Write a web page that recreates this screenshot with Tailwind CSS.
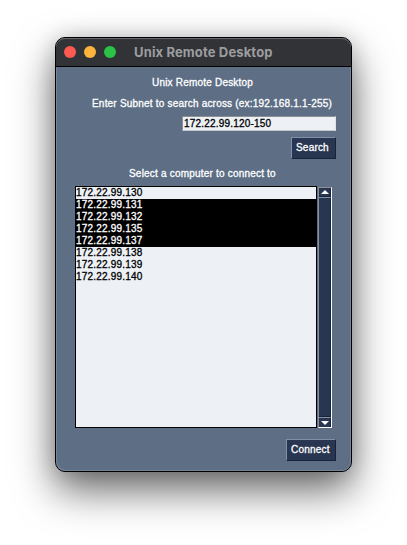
<!DOCTYPE html>
<html lang="en">
<head>
<meta charset="utf-8">
<title>Unix Remote Desktop</title>
<script src="https://cdn.jsdelivr.net/npm/@tailwindcss/browser@4"></script>
</head>
<body class="h-[545px] w-[407px] overflow-hidden bg-white pt-[37px] pl-[55px] font-['Liberation_Sans',Arial,sans-serif] text-[10px] leading-[12px] tracking-[0.2px]">
<main class="flex h-[435px] w-[297px] flex-col overflow-hidden rounded-[10px] border border-black bg-[#5d6e85] shadow-[0_18px_40px_rgba(0,0,0,0.6),0_0_20px_rgba(0,0,0,0.15)]">
  <header class="flex h-[29px] shrink-0 items-center rounded-t-[9px] border-b border-b-black bg-[#323336] pl-2 shadow-[inset_0_1px_0_#66676a]">
    <div class="flex gap-2">
      <span class="size-3 rounded-full bg-[#ff5a52]"></span>
      <span class="size-3 rounded-full bg-[#fdb43c]"></span>
      <span class="size-3 rounded-full bg-[#2bc346]"></span>
    </div>
    <h1 class="ml-[18px] whitespace-nowrap font-['Inter',sans-serif] text-[13px] leading-4 font-bold tracking-[0.14px] text-[#9c9da0]">Unix Remote Desktop</h1>
  </header>
  <section class="flex flex-1 flex-col rounded-b-[9px] pt-[10px] text-white shadow-[inset_1px_-1px_0_#74859a,inset_-1px_0_0_#74859a] [-webkit-text-stroke:0.3px]">
    <p class="pl-24">Unix Remote Desktop</p>
    <p class="mt-[9px] whitespace-nowrap pl-9">Enter Subnet to search across (ex:192.168.1.1-255)</p>
    <div class="mt-[6px] mr-[15px] h-[15px] w-[154px] self-end border border-t-[#8c8f94] border-l-[#8c8f94] border-r-[#dfe3e8] border-b-[#c5c9cf] bg-[#edf1f6] pt-px pl-px text-black">172.22.99.120-150</div>
    <button class="mt-[6px] mr-[15px] h-[22px] w-[45px] self-end border border-t-[#8190a6] border-l-[#8190a6] border-r-[#18233a] border-b-[#18233a] bg-[#283651] pb-px pl-[4px] text-left">Search</button>
    <p class="mt-[9px] pl-[73px]">Select a computer to connect to</p>
    <div class="mt-[6px] ml-[19px] flex h-[242px] gap-px">
      <ul class="w-[242px] border border-black bg-[#edf1f6] text-black">
        <li class="h-3">172.22.99.130</li>
        <li class="h-3 bg-black text-white">172.22.99.131</li>
        <li class="h-3 bg-black text-white">172.22.99.132</li>
        <li class="h-3 bg-black text-white">172.22.99.135</li>
        <li class="h-3 bg-black text-white">172.22.99.137</li>
        <li class="h-3">172.22.99.138</li>
        <li class="h-3">172.22.99.139</li>
        <li class="h-3">172.22.99.140</li>
      </ul>
      <div class="mt-px flex w-[14px] flex-col border border-t-[#8c8f94] border-l-[#8c8f94] border-r-white border-b-white bg-[#283651]">
        <div class="flex h-[9px] items-center justify-center border-r border-b border-[#18233a]">
          <svg width="8" height="4" viewBox="0 0 8 4"><path d="M0 4L4 0L8 4Z" fill="#fff"/></svg>
        </div>
        <div class="flex-1 border-t border-r border-b border-t-[#8190a6] border-r-[#18233a] border-b-[#18233a]"></div>
        <div class="flex h-[10px] items-center justify-center border-t border-r border-t-[#8190a6] border-r-[#18233a]">
          <svg width="8" height="4" viewBox="0 0 8 4"><path d="M0 0H8L4 4Z" fill="#fff"/></svg>
        </div>
      </div>
    </div>
    <button class="mt-[11px] mr-[15px] h-[22px] w-[50px] self-end border border-t-[#8190a6] border-l-[#8190a6] border-r-[#18233a] border-b-[#18233a] bg-[#283651] pb-px pl-[4px] text-left">Connect</button>
  </section>
</main>
</body>
</html>
